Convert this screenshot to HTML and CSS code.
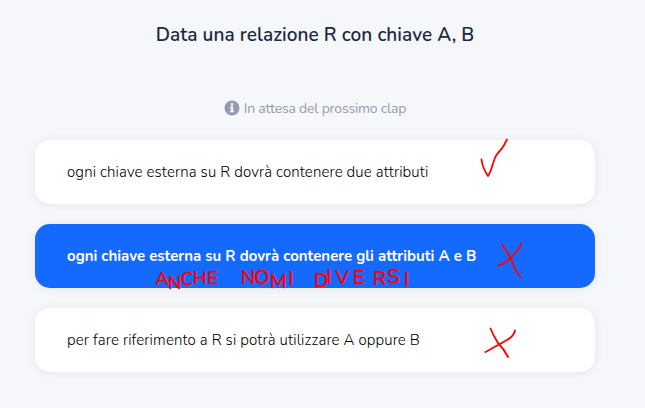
FILE: index.html
```
<!DOCTYPE html>
<html lang="it">
<head>
<meta charset="utf-8">
<title>Data una relazione R con chiave A, B</title>
<link rel="stylesheet" href="styles.css">
</head>
<body>
<main class="quiz">
  <h1 class="question">Data una relazione R con chiave A, B</h1>
  <p class="status">
    <svg class="info" viewBox="0 0 16 16" aria-hidden="true"><circle cx="8" cy="8" r="7.5"/><path d="M6.8 3.3h2.4v2.2H6.8zM6 6.6h3.2v4.1h.9v1.6H6v-1.6h.9V8.2H6z"/></svg>
    <span>In attesa del prossimo clap</span>
  </p>
  <div class="answers">
    <div class="answer">ogni chiave esterna su R dovrà contenere due attributi</div>
    <div class="answer selected">ogni chiave esterna su R dovrà contenere gli attributi A e B</div>
    <div class="answer">per fare riferimento a R si potrà utilizzare A oppure B</div>
  </div>
  <svg class="notes" viewBox="0 0 645 408">
    <path d="M481.500 159.500Q482.500 168 488 176C492 171 493 160 496.500 155C500 150 504 147 505 143L507 139.500"/>
    <path d="M502 244.500L511 258Q514 270 520.500 277M521 243L520 247Q514 255 508 260T498 265.500"/>
    <path d="M490.500 328.500Q493 335 498 343Q504 349 508 357M515 330.500Q514 336 507 340T485.500 352"/>
    <text x="155.500 168 181 193 207.500" y="285 289 284.500 284 284">ANCHE</text>
    <text class="large" x="241 254.500 270 288.500" y="284 284 288 285">NOMI</text>
    <text class="large" x="314 326.500 335.500 353 373 387.500 404" y="287 283 283.500 284 285 283 286">DIVERSI</text>
  </svg>
</main>
</body>
</html>
```
FILE: styles.css
```
* { box-sizing: border-box; }
body {
  margin: 0;
  background: #f5f7fb;
  font-family: Nunito, "Noto Sans", sans-serif;
  color: #000;
}
.quiz {
  position: relative;
  width: 645px;
  height: 408px;
  padding: 21px 50px 0 35px;
  overflow: hidden;
}
.question {
  margin: 0;
  font-size: 19px;
  line-height: 28px;
  font-weight: 650;
  letter-spacing: 0.05px;
  text-align: center;
  color: #1b2a41;
}
.status {
  display: flex;
  align-items: center;
  justify-content: center;
  gap: 4px;
  margin: 49px 0 22px;
  height: 20px;
  font-size: 14px;
  font-weight: 400;
  letter-spacing: -0.2px;
  color: #959ab1;
}
.info { width: 16px; height: 16px; }
.info circle { fill: #959ab1; }
.info path { fill: #f5f7fb; }
.answers { display: grid; gap: 20px; }
.answer {
  display: flex;
  align-items: center;
  height: 64px;
  padding: 0 32px;
  border-radius: 15px;
  background: #fff;
  box-shadow: 0 1px 10px rgba(0, 0, 0, 0.07);
  font-size: 15px;
  font-weight: 350;
  letter-spacing: 0.13px;
  white-space: nowrap;
}
.selected {
  background: #146aff;
  color: #fff;
  font-weight: 700;
  letter-spacing: 0;
}
.notes {
  position: absolute;
  inset: 0;
  width: 645px;
  height: 408px;
}
.notes path {
  fill: none;
  stroke: #f00;
  stroke-width: 1.8;
  stroke-linecap: round;
  stroke-linejoin: round;
}
.notes text {
  fill: #f00;
  stroke: #f00;
  stroke-width: 0.6;
  font-size: 18px;
}
.notes .large { font-size: 19.5px; }
```
